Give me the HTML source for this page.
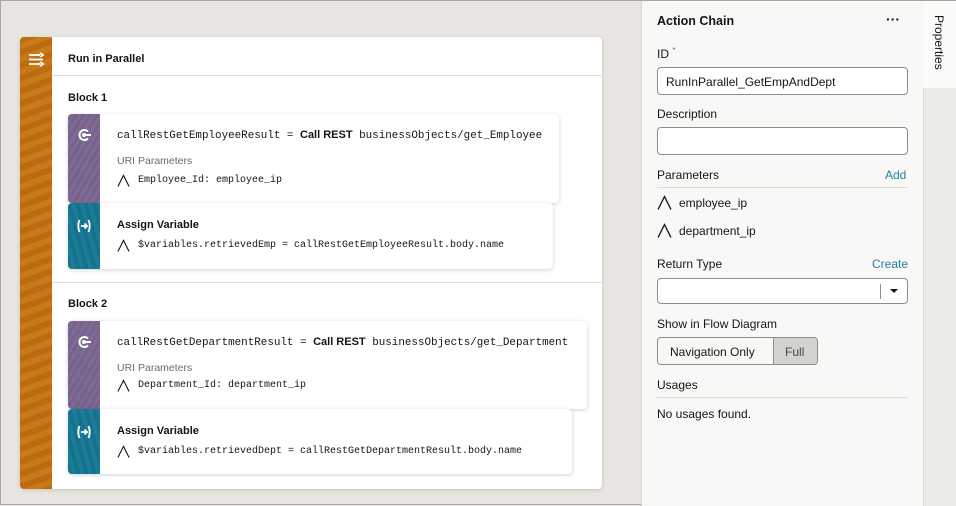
<!DOCTYPE html>
<html><head><style>
*{box-sizing:border-box;margin:0;padding:0}
body{width:956px;height:505px;overflow:hidden;background:#e8e5e1;font-family:"Liberation Sans",sans-serif;color:#161513;position:relative;border:1px solid #a8a6a3}
.abs{position:absolute}
.card{position:absolute;left:19px;top:36px;width:582px;height:452px;background:#fff;border-radius:4px;box-shadow:0 1px 4px rgba(0,0,0,.15);overflow:hidden}
.strip{position:absolute;left:0;top:0;width:32px;height:100%;background:repeating-linear-gradient(160deg,#bc6c0f 0 6px,#c77a1a 6px 12px)}
.mono{font-family:"Liberation Mono",monospace}
.act{position:absolute;background:#fff;border-radius:4px;box-shadow:0 1px 4px rgba(0,0,0,.18);overflow:hidden}
.as{position:absolute;left:0;top:0;width:32px;height:100%}
.purple{background:repeating-linear-gradient(120deg,#76628c 0 3px,#7e6a94 3px 6px)}
.teal{background:repeating-linear-gradient(75deg,#16728c 0 4px,#1a7c96 4px 8px)}
.ic{position:absolute;left:8px;width:16px;height:16px}
.lbl{font-size:12px;color:#161513}
.b{font-weight:bold}
.A{width:13px;height:13px}
.inp{position:absolute;left:656px;width:251px;height:28px;border:1px solid #8f8d8a;border-radius:4px;background:#fff;font-size:12px;padding:7px 8px}
</style></head><body>
<svg width="0" height="0" style="position:absolute"><symbol id="a" viewBox="0 0 14 14"><path d="M1 13.5L7 1.5L13 13.5" fill="none" stroke="#161513" stroke-width="1.2"/></symbol>
<symbol id="rest" viewBox="0 0 16 16"><path d="M12 4.5A5 5 0 1 0 12 11.5" fill="none" stroke="#fff" stroke-width="2"/><circle cx="8" cy="8" r="2" fill="#fff"/><path d="M8 8H15" stroke="#fff" stroke-width="2"/></symbol>
<symbol id="asg" viewBox="0 0 16 16"><path d="M3.5 2Q1 8 3.5 14M12.5 2Q15 8 12.5 14" fill="none" stroke="#fff" stroke-width="1.8"/><path d="M5 8H11M8.5 5.5L11 8L8.5 10.5" fill="none" stroke="#fff" stroke-width="1.8"/></symbol></svg>
<div class="card">
 <div class="strip"></div>
 <svg class="abs" style="left:8px;top:15px" width="17" height="15" viewBox="0 0 17 15"><path d="M1 3H12M1 7.5H15M1 12H12M12 1L15 3L12 5M12 10L15 12L12 14" fill="none" stroke="#fff" stroke-width="1.8"/></svg>
 <div class="abs b" style="left:48px;top:16px;font-size:11px">Run in Parallel</div>
 <div class="abs" style="left:32px;top:38px;width:550px;height:1px;background:#e0dedb"></div>
 <div class="abs b" style="left:48px;top:55px;font-size:11px">Block 1</div>
 <div class="abs" style="left:32px;top:245px;width:550px;height:1px;background:#e0dedb"></div>
 <div class="abs b" style="left:48px;top:261px;font-size:11px">Block 2</div>
</div>

<div class="act" style="left:67px;top:113px;width:491px;height:89px">
 <div class="as purple"></div><svg class="ic" style="top:13px"><use href="#rest"/></svg>
 <div class="abs mono" style="left:49px;top:15px;font-size:10.9px">callRestGetEmployeeResult = <span style="font-family:'Liberation Sans';font-weight:bold;font-size:11px">Call REST</span> businessObjects/get_Employee</div>
 <div class="abs" style="left:49px;top:41px;font-size:10.5px;color:#6f6c69">URI Parameters</div>
 <svg class="abs A" style="left:49px;top:60px"><use href="#a"/></svg>
 <div class="abs mono" style="left:70px;top:61px;font-size:10px">Employee_Id: employee_ip</div>
</div>
<div class="act" style="left:67px;top:202px;width:485px;height:66px">
 <div class="as teal"></div><svg class="ic" style="top:15px"><use href="#asg"/></svg>
 <div class="abs b" style="left:49px;top:16px;font-size:11px">Assign Variable</div>
 <svg class="abs A" style="left:49px;top:36px"><use href="#a"/></svg>
 <div class="abs mono" style="left:70px;top:37px;font-size:10px">$variables.retrievedEmp = callRestGetEmployeeResult.body.name</div>
</div>

<div class="act" style="left:67px;top:320px;width:519px;height:88px">
 <div class="as purple"></div><svg class="ic" style="top:13px"><use href="#rest"/></svg>
 <div class="abs mono" style="left:49px;top:15px;font-size:10.9px">callRestGetDepartmentResult = <span style="font-family:'Liberation Sans';font-weight:bold;font-size:11px">Call REST</span> businessObjects/get_Department</div>
 <div class="abs" style="left:49px;top:41px;font-size:10.5px;color:#6f6c69">URI Parameters</div>
 <svg class="abs A" style="left:49px;top:58px"><use href="#a"/></svg>
 <div class="abs mono" style="left:70px;top:59px;font-size:10px">Department_Id: department_ip</div>
</div>
<div class="act" style="left:67px;top:408px;width:504px;height:65px">
 <div class="as teal"></div><svg class="ic" style="top:15px"><use href="#asg"/></svg>
 <div class="abs b" style="left:49px;top:16px;font-size:11px">Assign Variable</div>
 <svg class="abs A" style="left:49px;top:36px"><use href="#a"/></svg>
 <div class="abs mono" style="left:70px;top:37px;font-size:10px">$variables.retrievedDept = callRestGetDepartmentResult.body.name</div>
</div>

<div class="abs" style="left:640px;top:0;width:283px;height:505px;background:#f9f8f7;border-left:1px solid #dcdad7"></div>
<div class="abs" style="left:923px;top:0;width:33px;height:87px;background:#fbfaf9"></div>
<div class="abs" style="left:922px;top:87px;width:34px;height:418px;background:#ecebe8;border-left:1px solid #dcdad7"></div>
<div class="abs" style="left:931px;top:14px;font-size:12px;writing-mode:vertical-rl">Properties</div>

<div class="abs b" style="left:656px;top:13px;font-size:12.5px">Action Chain</div>
<div class="abs b" style="left:885px;top:10px;font-size:14px">···</div>
<div class="abs lbl" style="left:656px;top:45px">ID <sup style="font-size:8px;color:#6f6c69">*</sup></div>
<div class="inp" style="top:66px">RunInParallel_GetEmpAndDept</div>
<div class="abs lbl" style="left:656px;top:106px">Description</div>
<div class="inp" style="top:126px"></div>
<div class="abs lbl" style="left:656px;top:167px">Parameters</div>
<div class="abs" style="left:884px;top:167px;font-size:12px;color:#227e9e">Add</div>
<div class="abs" style="left:656px;top:186px;width:251px;height:1px;background:#dcdad7"></div>
<svg class="abs" style="left:656px;top:194px;width:15px;height:15px"><use href="#a"/></svg>
<div class="abs lbl" style="left:678px;top:195px">employee_ip</div>
<svg class="abs" style="left:656px;top:222px;width:15px;height:15px"><use href="#a"/></svg>
<div class="abs lbl" style="left:678px;top:223px">department_ip</div>
<div class="abs lbl" style="left:656px;top:256px">Return Type</div>
<div class="abs" style="left:871px;top:256px;font-size:12px;color:#227e9e">Create</div>
<div class="inp" style="top:277px;height:26px"></div>
<div class="abs" style="left:879px;top:283px;width:1px;height:15px;background:#8f8d8a"></div>
<div class="abs" style="left:889px;top:288px;border-left:4px solid transparent;border-right:4px solid transparent;border-top:4px solid #161513"></div>
<div class="abs lbl" style="left:656px;top:316px">Show in Flow Diagram</div>
<div class="abs" style="left:656px;top:336px;width:161px;height:28px;border:1px solid #8f8d8a;border-radius:4px;background:#f9f8f7;overflow:hidden">
 <div class="abs lbl" style="left:12px;top:7px">Navigation Only</div>
 <div class="abs" style="left:115px;top:0;width:46px;height:28px;background:#d4d2cf;border-left:1px solid #8f8d8a"></div>
 <div class="abs lbl" style="left:127px;top:7px;color:#4a4845">Full</div>
</div>
<div class="abs lbl" style="left:656px;top:377px">Usages</div>
<div class="abs" style="left:656px;top:396px;width:251px;height:1px;background:#dcdad7"></div>
<div class="abs lbl" style="left:656px;top:406px">No usages found.</div>
</body></html>
